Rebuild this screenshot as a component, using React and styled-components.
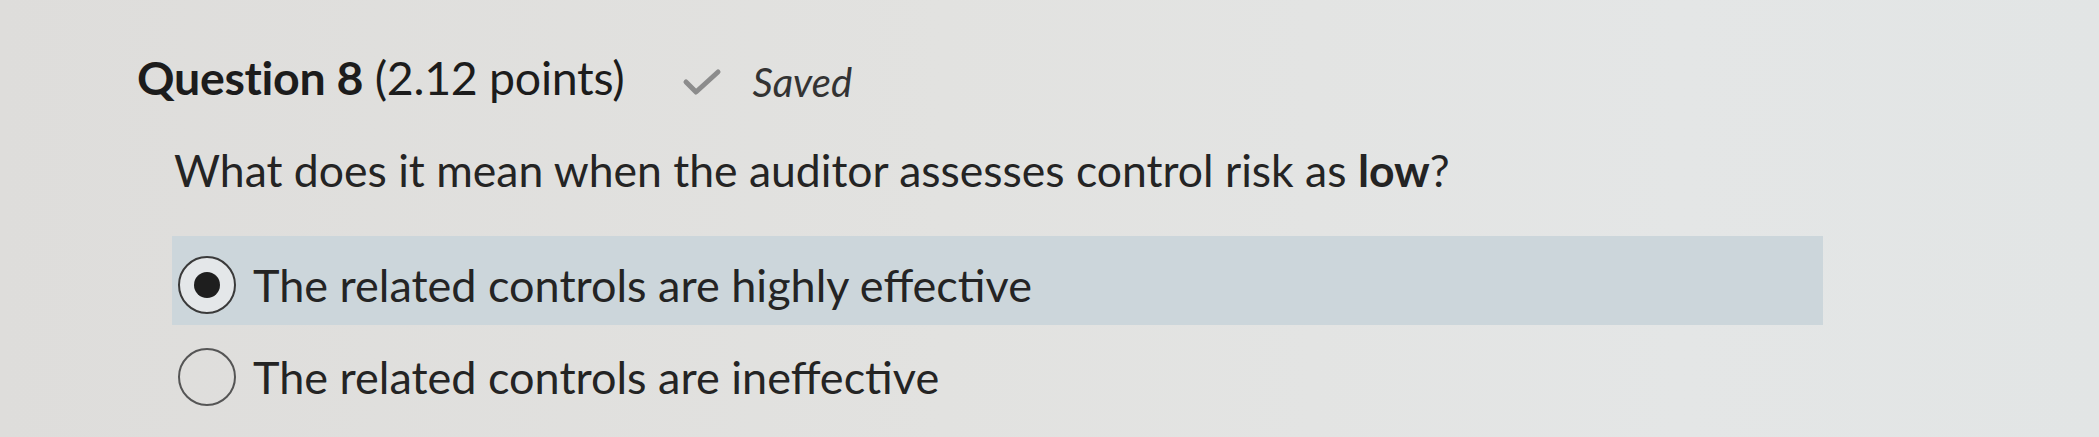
import React from 'react'
import styled, { createGlobalStyle } from 'styled-components'

const GlobalStyle = createGlobalStyle`
  html, body {
    margin: 0;
    padding: 0;
  }
  body {
    background: linear-gradient(90deg, #dedddb 0%, #e2e2e0 45%, #e4e6e6 80%, #e2e5e5 100%);
    font-family: Lato, "Open Sans", "Liberation Sans", sans-serif;
    color: #242424;
  }
`

const answers = [
  { id: 'a', label: 'The related controls are highly effective', checked: true },
  { id: 'b', label: 'The related controls are ineffective', checked: false }
]

const Check = () => (
  <svg width="40" height="28" viewBox="0 0 40 28">
    <polyline
      points="4,14 14,24 36,4"
      fill="none"
      stroke="#8c8c8c"
      strokeWidth="5"
      strokeLinecap="round"
      strokeLinejoin="round"
    />
  </svg>
)

export default function App() {
  return (
    <>
      <GlobalStyle />
      <Page>
        <Header>
          <Title>
            <strong>Question 8</strong> (2.12 points)
          </Title>
          <Status>
            <Check />
            <span>Saved</span>
          </Status>
        </Header>
        <Prompt>
          What does it mean when the auditor assesses control risk as <strong>low</strong>?
        </Prompt>
        <Answers>
          {answers.map(a => (
            <Answer key={a.id} $checked={a.checked}>
              <Radio $checked={a.checked} />
              <Label>{a.label}</Label>
            </Answer>
          ))}
        </Answers>
      </Page>
    </>
  )
}

const Page = styled.div`
  width: 2099px;
  height: 437px;
  box-sizing: border-box;
  padding: 50px 0 0 137px;
  overflow: hidden;
`
const Header = styled.div`
  display: flex;
  align-items: center;
  gap: 58px;
`
const Title = styled.h2`
  margin: 0;
  font-size: 46.5px;
  font-weight: 400;
  line-height: 1.2;
  letter-spacing: -0.3px;
  color: #1c1c1c;
  strong {
    font-weight: 700;
  }
`
const Status = styled.div`
  display: flex;
  align-items: center;
  gap: 30px;
  margin-top: 8px;
  font-size: 40px;
  font-style: italic;
  color: #333;
`
const Prompt = styled.p`
  margin: 37px 0 0 37px;
  font-size: 44.5px;
  line-height: 1.2;
  strong {
    font-weight: 700;
  }
`
const Answers = styled.div`
  display: flex;
  flex-direction: column;
  gap: 3px;
  margin: 40px 0 0 35px;
  width: 1651px;
`
const Answer = styled.label`
  display: flex;
  align-items: center;
  gap: 17px;
  height: 89px;
  box-sizing: border-box;
  padding: 8px 0 0 6px;
  background: ${p => (p.$checked ? '#ccd6db' : 'transparent')};
`
const Radio = styled.span`
  position: relative;
  flex: none;
  width: 54px;
  height: 54px;
  border-radius: 50%;
  border: 2.5px solid ${p => (p.$checked ? '#3a3a3a' : '#555')};
  background: ${p => (p.$checked ? '#e4e7e9' : 'transparent')};
  &::after {
    content: '';
    display: ${p => (p.$checked ? 'block' : 'none')};
    position: absolute;
    top: 50%;
    left: 50%;
    width: 26px;
    height: 26px;
    margin: -13px 0 0 -13px;
    border-radius: 50%;
    background: #1e1e1e;
  }
`
const Label = styled.span`
  font-size: 45px;
  line-height: 1.2;
`
